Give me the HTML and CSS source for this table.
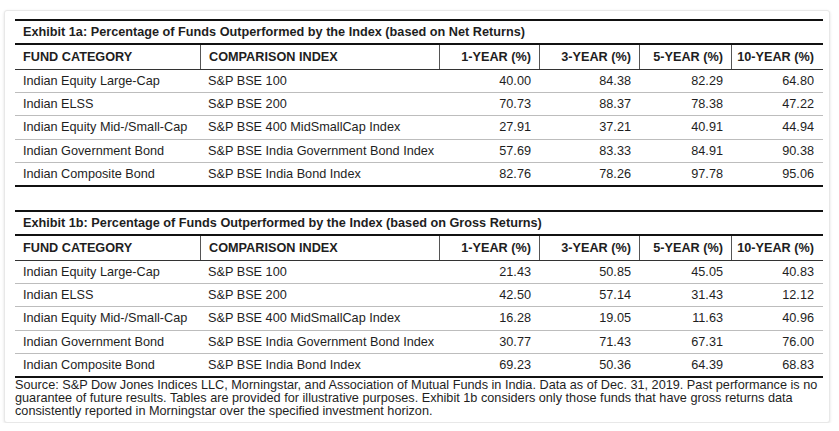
FILE: index.html
```html
<!DOCTYPE html>
<html lang="en">
<head>
<meta charset="utf-8">
<title>Exhibit 1</title>
<link rel="stylesheet" href="styles.css">
</head>
<body>
<div class="card">
  <div class="exhibit">
    <div class="title">Exhibit 1a: Percentage of Funds Outperformed by the Index (based on Net Returns)</div>
    <div class="row head">
      <div class="c txt">FUND CATEGORY</div>
      <div class="c txt">COMPARISON INDEX</div>
      <div class="c num">1-YEAR (%)</div>
      <div class="c num">3-YEAR (%)</div>
      <div class="c num">5-YEAR (%)</div>
      <div class="c num">10-YEAR (%)</div>
    </div>
    <div class="row">
      <div class="c txt">Indian Equity Large-Cap</div><div class="c txt">S&amp;P BSE 100</div>
      <div class="c num">40.00</div><div class="c num">84.38</div><div class="c num">82.29</div><div class="c num">64.80</div>
    </div>
    <div class="row">
      <div class="c txt">Indian ELSS</div><div class="c txt">S&amp;P BSE 200</div>
      <div class="c num">70.73</div><div class="c num">88.37</div><div class="c num">78.38</div><div class="c num">47.22</div>
    </div>
    <div class="row">
      <div class="c txt">Indian Equity Mid-/Small-Cap</div><div class="c txt">S&amp;P BSE 400 MidSmallCap Index</div>
      <div class="c num">27.91</div><div class="c num">37.21</div><div class="c num">40.91</div><div class="c num">44.94</div>
    </div>
    <div class="row">
      <div class="c txt">Indian Government Bond</div><div class="c txt">S&amp;P BSE India Government Bond Index</div>
      <div class="c num">57.69</div><div class="c num">83.33</div><div class="c num">84.91</div><div class="c num">90.38</div>
    </div>
    <div class="row last">
      <div class="c txt">Indian Composite Bond</div><div class="c txt">S&amp;P BSE India Bond Index</div>
      <div class="c num">82.76</div><div class="c num">78.26</div><div class="c num">97.78</div><div class="c num">95.06</div>
    </div>
  </div>

  <div class="exhibit second">
    <div class="title">Exhibit 1b: Percentage of Funds Outperformed by the Index (based on Gross Returns)</div>
    <div class="row head">
      <div class="c txt">FUND CATEGORY</div>
      <div class="c txt">COMPARISON INDEX</div>
      <div class="c num">1-YEAR (%)</div>
      <div class="c num">3-YEAR (%)</div>
      <div class="c num">5-YEAR (%)</div>
      <div class="c num">10-YEAR (%)</div>
    </div>
    <div class="row">
      <div class="c txt">Indian Equity Large-Cap</div><div class="c txt">S&amp;P BSE 100</div>
      <div class="c num">21.43</div><div class="c num">50.85</div><div class="c num">45.05</div><div class="c num">40.83</div>
    </div>
    <div class="row">
      <div class="c txt">Indian ELSS</div><div class="c txt">S&amp;P BSE 200</div>
      <div class="c num">42.50</div><div class="c num">57.14</div><div class="c num">31.43</div><div class="c num">12.12</div>
    </div>
    <div class="row">
      <div class="c txt">Indian Equity Mid-/Small-Cap</div><div class="c txt">S&amp;P BSE 400 MidSmallCap Index</div>
      <div class="c num">16.28</div><div class="c num">19.05</div><div class="c num">11.63</div><div class="c num">40.96</div>
    </div>
    <div class="row">
      <div class="c txt">Indian Government Bond</div><div class="c txt">S&amp;P BSE India Government Bond Index</div>
      <div class="c num">30.77</div><div class="c num">71.43</div><div class="c num">67.31</div><div class="c num">76.00</div>
    </div>
    <div class="row last">
      <div class="c txt">Indian Composite Bond</div><div class="c txt">S&amp;P BSE India Bond Index</div>
      <div class="c num">69.23</div><div class="c num">50.36</div><div class="c num">64.39</div><div class="c num">68.83</div>
    </div>
  </div>

  <p class="source">Source: S&amp;P Dow Jones Indices LLC, Morningstar, and Association of Mutual Funds in India. Data as of Dec. 31, 2019. Past performance is no guarantee of future results. Tables are provided for illustrative purposes. Exhibit 1b considers only those funds that have gross returns data consistently reported in Morningstar over the specified investment horizon.</p>
</div>
</body>
</html>
```

FILE: styles.css
```css
* { box-sizing: border-box; }

html, body {
  margin: 0;
  padding: 0;
  background: #ffffff;
}

body {
  font-family: "Liberation Sans", Arial, sans-serif;
  font-size: 12.7px;
  color: #1e1e1e;
}

.card {
  margin: 10px 0 0 4px;
  width: 826px;
  height: 413px;
  padding: 8px 8px 0 10px;
  background: #ffffff;
  border: 1px solid #e8e8e8;
  border-radius: 3px;
  box-shadow: 0 1px 3px rgba(0, 0, 0, 0.12);
}

.exhibit {
  width: 808px;
  border-top: 2px solid #111;
}

.second {
  margin-top: 23px;
}

.title {
  height: 24px;
  line-height: 22px;
  padding-left: 8px;
  font-weight: bold;
  border-bottom: 2px solid #111;
}

.row {
  display: grid;
  grid-template-columns: 185px 239px 100px 100px 92px 92px;
  height: 23.2px;
  border-bottom: 1px solid #bdbdbd;
}

.row.head {
  height: 25px;
  font-weight: bold;
  border-bottom: 1px solid #333;
}

.row.head .c + .c {
  border-left: 1px solid #555;
}

.row.last {
  height: 24.2px;
  border-bottom: 2px solid #111;
}

.c {
  display: flex;
  align-items: center;
  white-space: nowrap;
}

.txt {
  padding-left: 8px;
}

.num {
  justify-content: flex-end;
  padding-right: 8px;
}

.row .c:last-child {
  padding-right: 9px;
}

.source {
  margin: 0;
  width: 808px;
  line-height: 13.3px;
  padding-top: 1px;
}
```
